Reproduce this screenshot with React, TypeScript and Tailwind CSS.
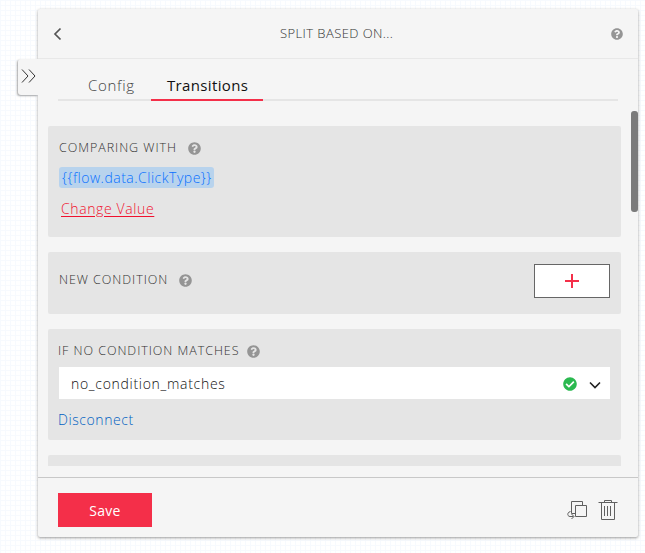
import { FaQuestionCircle, FaCheckCircle } from "react-icons/fa";

function Help({ className = "" }: { className?: string }) {
  return <FaQuestionCircle size={13} className={`shrink-0 text-[#959595] ${className}`} />;
}

function Label({ text, width, className = "" }: { text: string; width: string; className?: string }) {
  return (
    <div className={`flex h-4 items-center ${className}`}>
      <span className={`whitespace-nowrap text-[12.5px] leading-4 font-light tracking-[0.95px] text-[#333] ${width}`}>{text}</span>
      <Help />
    </div>
  );
}

export default function App() {
  return (
    <div className="relative h-[553px] w-[645px] overflow-hidden bg-white bg-[linear-gradient(#f7fafe_1px,transparent_1px),linear-gradient(90deg,#f7fafe_1px,transparent_1px)] bg-[size:5px_5px] pt-[9px] pl-[38px] font-['Open_Sans','Noto_Sans',sans-serif]">
      <main className="flex h-[528px] w-[600px] flex-col rounded-[2px] bg-[#f5f5f5] shadow-[0_1px_3px_rgba(0,0,0,0.4)]">
        <header className="flex h-[50px] shrink-0 items-center border-b border-[#e8e8e8] pr-[15px] pl-[14px]">
          <svg width="10" height="14" viewBox="0 0 10 14" fill="none" stroke="#555" strokeWidth="1.7"><path d="M8.5 1.5 3 7l5.5 5.5" /></svg>
          <h1 className="ml-[218px] w-[116px] whitespace-nowrap text-[13px] font-light tracking-[0.42px] text-[#333]">SPLIT BASED ON...</h1>
          <FaQuestionCircle size={12} className="ml-auto text-[#959595]" />
        </header>
        <nav className="mx-5 flex h-[42px] shrink-0 border-b-2 border-[#e5e5e5] text-[15px]">
          <div className="w-[93px] pt-[14px] pl-[30px] leading-6 font-light tracking-[0.7px] text-[#444]">Config</div>
          <div className="h-[42px] w-[112px] border-b-2 border-[#f42f49] pt-[14px] pl-4 leading-6 tracking-[0.35px] text-[#111]">Transitions</div>
        </nav>
        <div className="mt-[10px] flex h-[366px] shrink-0 justify-between overflow-hidden">
          <div className="ml-[10px] flex h-[355px] w-[573px] flex-col gap-[15px] overflow-hidden pt-[15px]">
            <section className="h-[111px] shrink-0 rounded-[2px] bg-[#e5e5e5] pt-[14px] pl-[11px]">
              <Label text="COMPARING WITH" width="w-[129px]" />
              <div className="mt-[11px] h-[21px] w-[155px] rounded-[3px] bg-[#b8d3ed] pl-[3px] text-[14px] leading-[21px] font-light tracking-[0.5px] whitespace-nowrap text-[#0870ff]">{"{{flow.data.ClickType}}"}</div>
              <a className="mt-[11px] ml-[2px] block w-fit text-[14px] leading-5 font-light tracking-[0.62px] text-[#f0122f] underline underline-offset-2">Change Value</a>
            </section>
            <section className="flex h-[62px] shrink-0 items-center justify-between rounded-[2px] bg-[#e5e5e5] pr-[11px] pl-[11px]">
              <Label text="NEW CONDITION" width="w-[120px]" className="mb-[6px]" />
              <button className="mb-1 flex h-[34px] w-[76px] items-center justify-center border border-[#666] bg-white">
                <svg width="14" height="14" shapeRendering="crispEdges" fill="#f42f49"><path d="M0 6h6V0h2v6h6v2H8v6H6V8H0Z" /></svg>
              </button>
            </section>
            <section className="h-[111px] shrink-0 rounded-[2px] bg-[#e5e5e5] pt-[14px] pl-[10px]">
              <Label text="IF NO CONDITION MATCHES" width="w-[189px]" />
              <div className="mt-[8px] ml-[1px] flex h-8 w-[551px] items-center bg-white pl-[12px]">
                <span className="text-[14px] font-light tracking-[0.7px] text-[#111]">no_condition_matches</span>
                <FaCheckCircle size={14} className="ml-auto mt-[2px] text-[#2bb950]" />
                <svg className="mt-[4px] mr-[8px] ml-[11px]" width="14" height="9" fill="none" stroke="#222" strokeWidth="1.6"><path d="m2 1.5 5 5 5-5" /></svg>
              </div>
              <a className="mt-[11px] block text-[14px] leading-5 font-light tracking-[0.58px] text-[#005fc2]">Disconnect</a>
            </section>
            <section className="h-[111px] shrink-0 rounded-[2px] bg-[#e5e5e5]" />
          </div>
          <div className="h-[101px] w-[7px] rounded-[3px] bg-[#7b7b7b]" />
        </div>
        <footer className="flex h-[60px] shrink-0 items-start border-t border-[#c8c8c8] px-5 pt-[15px]">
          <button className="h-[34px] w-[94px] bg-[#f42f49] text-[14px] font-normal tracking-[0.3px] text-white">Save</button>
          <svg className="mt-2 ml-auto" width="21" height="20" fill="none" stroke="#606060"><path d="M8.5 12.5h-4V.5h11v4M8.5 4.5h11v11h-11z" /><path d="M3.5 10.5C0 11 0 15.5 3 15.5h3.5M4.5 13 7 15.5 4.5 18" /></svg>
          <svg className="mt-[7px] ml-[10px]" width="20" height="21" fill="none" stroke="#606060"><path d="M.5 2.5h19M6.5 2.5v-2h7v2M3.5 2.5v17h13v-17M6.5 6v10M9.5 6v10M12.5 6v10" /></svg>
        </footer>
      </main>
      <button className="absolute top-[59px] left-[18px] flex h-9 w-5 items-center justify-center rounded-l-[3px] bg-[#f5f5f5] shadow-[-1px_1px_2px_rgba(0,0,0,0.35)] [clip-path:inset(-4px_0_-4px_-4px)]">
        <svg className="mb-[3px]" width="15" height="14" fill="none" stroke="#333"><path d="m1 .5 6 6.5-6 6.5M8 .5 14 7l-6 6.5" /></svg>
      </button>
    </div>
  );
}
